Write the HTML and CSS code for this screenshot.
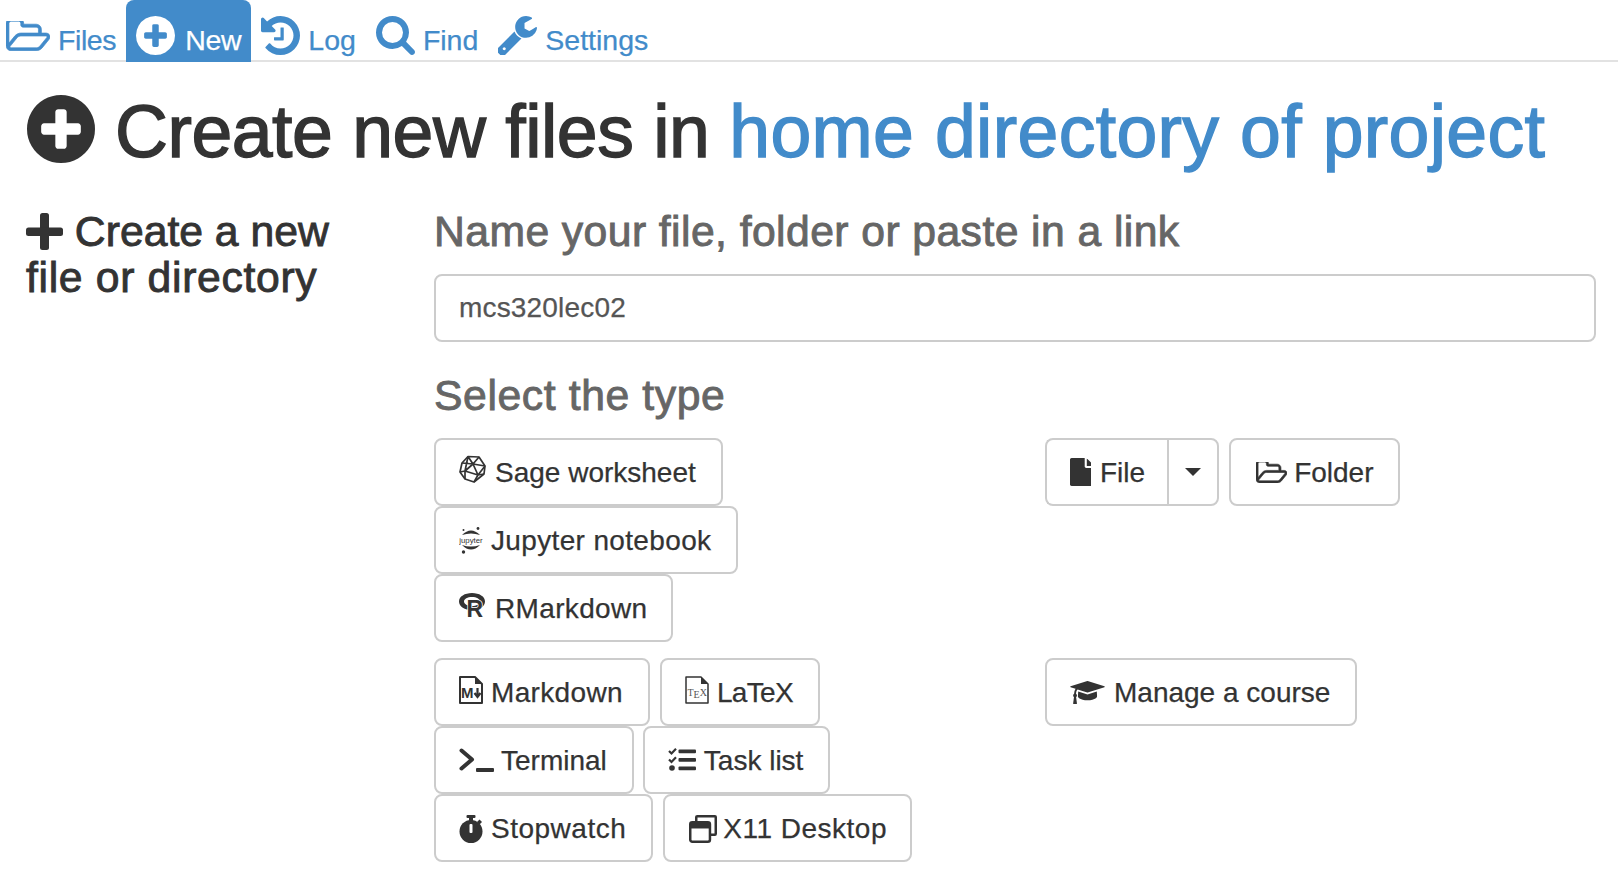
FILE: index.html
```html
<!DOCTYPE html>
<html lang="en">
<head>
<meta charset="utf-8">
<title>Create new files</title>
<link rel="stylesheet" href="styles.css">
</head>
<body>
<nav class="tabs">
  <a class="tab tab-first"><svg class="ico ico-folder-nav" viewBox="64 256 1909 1280"><path fill="currentColor" stroke="currentColor" stroke-width="30" d="M1845 931q0-35-53-35h-1088q-40 0-85.500 21.500t-71.500 52.500l-294 363q-18 24-18 40 0 35 53 35h1088q40 0 86-22t71-53l294-363q18-22 18-39zm-1141-163h768v-160q0-40-28-68t-68-28h-576q-40 0-68-28t-28-68v-64q0-40-28-68t-68-28h-320q-40 0-68 28t-28 68v853l256-315q44-53 116-87.500t140-34.500zm1269 163q0 62-46 120l-295 363q-43 53-116 87.500t-140 34.500h-1088q-92 0-158-66t-66-158v-960q0-92 66-158t158-66h320q92 0 158 66t66 158v32h544q92 0 158 66t66 158v160h192q54 0 99 24.500t67 70.500q15 32 15 68z"/></svg><span>Files</span></a>
  <a class="tab tab-active"><svg class="ico ico-nav" viewBox="128 128 1536 1536"><path fill="currentColor" d="M1344 960v-128q0-26-19-45t-45-19h-256v-256q0-26-19-45t-45-19h-128q-26 0-45 19t-19 45v256h-256q-26 0-45 19t-19 45v128q0 26 19 45t45 19h256v256q0 26 19 45t45 19h128q26 0 45-19t19-45v-256h256q26 0 45-19t19-45zm320-64q0 209-103 385.500t-279.500 279.500-385.500 103-385.500-103-279.500-279.500-103-385.500 103-385.500 279.500-279.500 385.500-103 385.500 103 279.500 279.500 103 385.500z"/></svg><span>New</span></a>
  <a class="tab tab-tight"><svg class="ico ico-nav" viewBox="128 128 1536 1536"><path fill="currentColor" d="M1664 896q0 156-61 298t-164 245-245 164-298 61q-172 0-327-72.500t-264-204.500q-7-10-6.500-22.500t8.500-20.500l137-138q10-9 25-9 16 2 23 12 73 95 179 147t225 52q104 0 198.500-40.500t163.500-109.500 109.500-163.500 40.500-198.500-40.500-198.500-109.500-163.500-163.500-109.500-198.500-40.500q-98 0-188 35.500t-160 101.500l137 138q31 30 14 69-17 40-59 40h-448q-26 0-45-19t-19-45v-448q0-42 40-59 39-17 69 14l130 129q107-101 244.500-156.500t284.500-55.500q156 0 298 61t245 164 164 245 61 298zm-640-288v448q0 14-9 23t-23 9h-320q-14 0-23-9t-9-23v-64q0-14 9-23t23-9h224v-352q0-14 9-23t23-9h64q14 0 23 9t9 23z"/></svg><span>Log</span></a>
  <a class="tab tab-tight"><svg class="ico ico-nav" viewBox="64 128 1664 1664"><path fill="currentColor" d="M1216 832q0-185-131.500-316.500t-316.500-131.500-316.500 131.500-131.500 316.500 131.500 316.500 316.500 131.500 316.500-131.500 131.500-316.500zm512 832q0 52-38 90t-90 38q-54 0-90-38l-343-342q-179 124-399 124-143 0-273.500-55.500t-225-150-150-225-55.500-273.500 55.500-273.500 150-225 225-150 273.500-55.500 273.500 55.500 225 150 150 225 55.500 273.500q0 220-124 399l343 343q37 37 37 90z"/></svg><span>Find</span></a>
  <a class="tab tab-tight"><svg class="ico ico-nav" viewBox="64 128 1600 1600"><path fill="currentColor" d="M384 1472q0-26-19-45t-45-19-45 19-19 45 19 45 45 19 45-19 19-45zm644-420l-682 682q-37 37-90 37-52 0-91-37l-106-108q-38-36-38-90 0-53 38-91l681-681q39 98 114.500 173.500t173.500 114.500zm634-435q0 39-23 106-47 134-164.500 217.500t-258.500 83.500q-185 0-316.500-131.500t-131.500-316.500 131.500-316.500 316.500-131.500q58 0 121.500 16.500t107.500 46.500q16 11 16 28t-16 28l-293 169v224l193 107q5-3 79-48.500t135.500-81 70.500-35.500q15 0 23.500 10t8.500 25z"/></svg><span>Settings</span></a>
</nav>

<main class="page">
  <h1 class="title"><svg class="ico ico-title" viewBox="128 128 1536 1536"><path fill="currentColor" d="M1344 960v-128q0-26-19-45t-45-19h-256v-256q0-26-19-45t-45-19h-128q-26 0-45 19t-19 45v256h-256q-26 0-45 19t-19 45v128q0 26 19 45t45 19h256v256q0 26 19 45t45 19h128q26 0 45-19t19-45v-256h256q26 0 45-19t19-45zm320-64q0 209-103 385.500t-279.500 279.500-385.500 103-385.500-103-279.500-279.500-103-385.500 103-385.500 279.500-279.500 385.500-103 385.500 103 279.500 279.500 103 385.500z"/></svg><span><span class="title-lead">Create new files in </span><span class="link">home directory of project</span></span></h1>

  <div class="layout">
    <aside class="side">
      <h3 class="side-title"><svg class="ico ico-plus" viewBox="0 0 37 37"><rect x="14" y="0" width="9" height="37" rx="2.500" fill="currentColor"/><rect x="0" y="14.500" width="37" height="8.500" rx="2.500" fill="currentColor"/></svg> Create a new<br><span class="side-line2">file or directory</span></h3>
    </aside>
    <section class="content">
      <h3 class="label">Name your file, folder or paste in a link</h3>
      <div class="name-input">mcs320lec02</div>
      <h3 class="label label-type">Select the type</h3>

      <div class="type-grid">
        <div class="stack">
          <div class="btn-row"><button class="btn"><svg class="ico ico-sage" viewBox="0 0 27 28"><g fill="none" stroke="currentColor" stroke-width="1.700" stroke-linejoin="round"><path d="M9 1.500 L20 2 L26 11 L25 19 L15 27 L6 24 L1 17 L3 8 Z"/><path d="M9 1.500 L14 9 L3 8 M14 9 L20 2 M14 9 L26 11 M14 9 L6 16 L1 17 M14 9 L19 20 L25 19 M6 16 L19 20 L15 27 M6 16 L6 24 M9 1.500 L6 16 M19 20 L26 11"/></g></svg><span>Sage worksheet</span></button></div>
          <div class="btn-row"><button class="btn btn-tight"><svg class="ico ico-jup" viewBox="0 0 24 28"><path fill="currentColor" d="M3 9 Q12 0 21 9 Q12 6 3 9 Z M3 19 Q12 28 21 19 Q12 22 3 19 Z"/><circle cx="19" cy="2.500" r="1.400" fill="currentColor"/><circle cx="4.500" cy="4" r="1" fill="currentColor"/><circle cx="4.500" cy="26" r="1.700" fill="currentColor"/><text class="jup-text" x="12" y="16.500">jupyter</text></svg><span class="sp-jup">Jupyter notebook</span></button></div>
          <div class="btn-row"><button class="btn btn-r"><svg class="ico ico-r" viewBox="0 0 27 30"><path fill="currentColor" fill-rule="evenodd" d="M13 0C5.800 0 0 3.500 0 8.500 C0 13.500 5.800 17 13 17 C20.200 17 26 13.500 26 8.500 C26 3.500 20.200 0 13 0Z M13 4 C8.500 4 5 6 5 8.500 C5 11 8.500 13 13 13 C17.500 13 21 11 21 8.500 C21 6 17.500 4 13 4Z"/><text class="r-text" x="7.500" y="23.500">R</text></svg><span class="sp-md">RMarkdown</span></button></div>
        </div>
        <div class="btn-row">
          <div class="split"><button class="btn btn-split-main"><svg class="ico ico-file" viewBox="256 0 1280 1792" preserveAspectRatio="none"><path fill="currentColor" d="M1152 512v-472q22 14 36 28l408 408q14 14 28 36h-472zm-128 32q0 40 28 68t68 28h544v1056q0 40-28 68t-68 28h-1344q-40 0-68-28t-28-68v-1600q0-40 28-68t68-28h800v544z" transform="translate(128 0)"/></svg><span>File</span></button><button class="btn btn-caret"><span class="caret"></span></button></div>
          <button class="btn btn-folder"><svg class="ico ico-folder" viewBox="64 256 1909 1280"><path fill="currentColor" stroke="currentColor" stroke-width="40" d="M1845 931q0-35-53-35h-1088q-40 0-85.500 21.500t-71.500 52.500l-294 363q-18 24-18 40 0 35 53 35h1088q40 0 86-22t71-53l294-363q18-22 18-39zm-1141-163h768v-160q0-40-28-68t-68-28h-576q-40 0-68-28t-28-68v-64q0-40-28-68t-68-28h-320q-40 0-68 28t-28 68v853l256-315q44-53 116-87.500t140-34.500zm1269 163q0 62-46 120l-295 363q-43 53-116 87.500t-140 34.500h-1088q-92 0-158-66t-66-158v-960q0-92 66-158t158-66h320q92 0 158 66t66 158v32h544q92 0 158 66t66 158v160h192q54 0 99 24.500t67 70.500q15 32 15 68z"/></svg><span>Folder</span></button>
        </div>
      </div>

      <div class="type-grid type-grid-second">
        <div class="stack">
          <div class="btn-row btn-row-10">
            <button class="btn btn-tight"><svg class="ico ico-doc" viewBox="0 0 24 28"><path fill="none" stroke="currentColor" stroke-width="2" stroke-linejoin="round" d="M1 1 H16 L23 8 V27 H1 Z"/><path fill="currentColor" d="M16 1 V8 H23 Z"/><text class="md-text" x="2" y="21.500">M</text><path fill="none" stroke="currentColor" stroke-width="2.200" d="M18.500 12 V20 M15.500 17 L18.500 21 L21.500 17"/></svg><span class="sp-md">Markdown</span></button>
            <button class="btn btn-tight"><svg class="ico ico-doc" viewBox="0 0 24 28"><path fill="none" stroke="currentColor" stroke-width="1.500" stroke-linejoin="round" d="M1 1 H16 L23 8 V27 H1 Z"/><path fill="currentColor" d="M16 1 V8 H23 Z"/><text class="tex-text" x="2.500" y="20">T<tspan dy="2">E</tspan><tspan dy="-2">X</tspan></text></svg><span class="sp-latex">LaTeX</span></button>
          </div>
          <div class="btn-row btn-row-9">
            <button class="btn btn-term"><svg class="ico ico-term" viewBox="0 0 35 24"><path fill="none" stroke="currentColor" stroke-width="4" stroke-linecap="round" stroke-linejoin="round" d="M2.500 2.500 L13 11.500 L2.500 20.500"/><rect x="17" y="20" width="18" height="4" rx="1" fill="currentColor"/></svg><span>Terminal</span></button>
            <button class="btn btn-tight"><svg class="ico ico-tasks" viewBox="0 0 28 23"><g fill="none" stroke="currentColor" stroke-width="2.200"><path d="M1 3 L3.500 5.500 L8 0.800 M1 11.500 L3.500 14 L8 9.300"/></g><circle cx="4" cy="20" r="2.800" fill="currentColor"/><rect x="10.500" y="1.500" width="17.500" height="3.800" rx="1" fill="currentColor"/><rect x="10.500" y="10" width="17.500" height="3.800" rx="1" fill="currentColor"/><rect x="10.500" y="18.500" width="17.500" height="3.800" rx="1" fill="currentColor"/></svg><span>Task list</span></button>
          </div>
          <div class="btn-row btn-row-10">
            <button class="btn btn-tight"><svg class="ico ico-watch" viewBox="0 0 24 28"><rect x="7.500" y="0" width="9" height="3" rx="1" fill="currentColor"/><rect x="10" y="2" width="4" height="4" fill="currentColor"/><path d="M18 7 L20.500 4.500 L23 7 L20.500 9.500 Z" fill="currentColor"/><circle cx="12" cy="16.500" r="11.500" fill="currentColor"/><rect x="10.500" y="9" width="3" height="9" rx="1" fill="#fff"/></svg><span class="sp-watch">Stopwatch</span></button>
            <button class="btn btn-win"><svg class="ico ico-win" viewBox="0 0 27 27"><path fill="none" stroke="currentColor" stroke-width="2.400" stroke-linejoin="round" d="M7 6 V2 Q7 1.200 8 1.200 H25 Q25.800 1.200 25.800 2 V18 Q25.800 19 25 19 H20"/><rect x="1.200" y="7" width="19" height="18.800" rx="2" fill="#fff" stroke="currentColor" stroke-width="2.400"/><rect x="1.200" y="7" width="19" height="6" fill="currentColor"/></svg><span class="sp-watch">X11 Desktop</span></button>
          </div>
        </div>
        <div class="btn-row">
          <button class="btn"><svg class="ico ico-cap" viewBox="0 128 2304 1536"><path fill="currentColor" d="M1774 836l18 316q4 69-82 128t-235 93.500-323 34.500-323-34.500-235-93.500-82-128l18-316 574 181q22 7 48 7t48-7zm530-324q0 23-22 31l-1120 352q-4 1-10 1t-10-1l-652-206q-43 34-71 111.500t-34 178.500q63 36 63 109 0 69-58 107l58 433q2 14-8 25-9 11-24 11h-192q-15 0-24-11-10-11-8-25l58-433q-58-38-58-107 0-73 65-111 11-207 98-330l-333-104q-22-8-22-31t22-31l1120-352q4-1 10-1t10 1l1120 352q22 8 22 31z"/></svg><span>Manage a course</span></button>
        </div>
      </div>
    </section>
  </div>
</main>
</body>
</html>
```
FILE: styles.css
```css
* { box-sizing: border-box; }
html, body { margin: 0; padding: 0; background: #fff; overflow: hidden; }
body { font-family: "Liberation Sans", Arial, sans-serif; color: #333; font-size: 28px; }

.ico { display: block; flex: none; }

.tabs { display: flex; height: 62px; border-bottom: 2px solid #e2e2e2; }
.tab { display: flex; align-items: flex-end; gap: 10px; padding: 0 10px 6px; height: 62px; color: #428bca; font-size: 28.5px; line-height: 32px; -webkit-text-stroke: .25px currentColor; }
.tab-first { padding: 0 10px 6px 6px; gap: 8px; letter-spacing: -.4px; }
.tab-tight { gap: 8px; }
.tab-active { background: #428bca; color: #fff; border-radius: 8px 8px 0 0; letter-spacing: -.3px; }
.ico-nav { width: 39px; height: 39px; margin-bottom: 1px; }
.ico-folder-nav { width: 44px; height: 30px; margin-bottom: 5px; }

.page { padding: 0 22px 0 26px; }
.title { display: flex; align-items: center; gap: 20px; margin: 30px 0 0; font-size: 73.4px; line-height: 80px; font-weight: 400; -webkit-text-stroke: 1.4px #333; white-space: nowrap; }
.ico-title { width: 68px; height: 68px; margin: 0 0 6px 1px; }
.title-lead { letter-spacing: -.49px; }
.link { color: #428bca; letter-spacing: .33px; -webkit-text-stroke: 1.4px #428bca; }

.layout { display: flex; margin-top: 36px; }
.side { width: 408px; flex: none; }
.side-title { margin: 0; font-size: 42.7px; line-height: 46px; font-weight: 400; -webkit-text-stroke: .9px #333; }
.side-line2 { letter-spacing: .67px; }
.ico-plus { display: inline-block; width: 37px; height: 37px; vertical-align: -4px; }
.content { flex: 1; }
.label { margin: 0 0 20px; font-size: 42.7px; line-height: 46px; font-weight: 400; letter-spacing: .42px; color: #666; -webkit-text-stroke: .9px #666; }
.label-type { margin-top: 30px; letter-spacing: .6px; }
.name-input { height: 68px; border: 2px solid #ccc; border-radius: 8px; padding: 0 23px; line-height: 64px; font-size: 28px; letter-spacing: .18px; color: #555; -webkit-text-stroke: .25px #555; }

.type-grid { display: grid; grid-template-columns: 611px 1fr; }
.type-grid-second { margin-top: 16px; }
.stack { display: flex; flex-direction: column; gap: 0; }
.btn-row { display: flex; gap: 11px; }
.btn-row-10 { gap: 10px; }
.btn-row-9 { gap: 9px; }

.btn { display: inline-flex; align-items: center; gap: 9px; height: 68px; padding: 0 25px 0 23px; background: #fff; border: 2px solid #ccc; border-radius: 8px; color: #333; font-family: inherit; font-size: 28px; line-height: 32px; white-space: nowrap; -webkit-text-stroke: .25px #333; }
.btn > span { padding-top: 2px; }
.btn-tight { gap: 8px; }
.btn-term { gap: 7px; }
.btn-win { gap: 6px; padding: 0 23px 0 24px; }
.btn-folder { gap: 7px; padding: 0 24px 0 25px; }
.btn-r { padding-right: 23px; }
.sp-jup { letter-spacing: .35px; }
.sp-md { letter-spacing: .35px; }
.sp-latex { letter-spacing: -.7px; }
.sp-watch { letter-spacing: .5px; }

.split { display: flex; margin-right: -1px; }
.btn-split-main { border-radius: 8px 0 0 8px; border-right: 0; padding-right: 22px; }
.btn-caret { border-radius: 0 8px 8px 0; padding: 0 16px; }
.btn > .caret { display: block; width: 0; height: 0; padding: 0; border-style: solid; border-width: 8px 8px 0; border-color: #333 transparent transparent; }

.ico-sage { width: 27px; height: 28px; margin-top: -6px; }
.ico-jup { width: 24px; height: 28px; margin-top: -1px; color: #333; }
.jup-text { font-family: "Liberation Sans", sans-serif; font-size: 7.800px; text-anchor: middle; fill: #333; -webkit-text-stroke: 0; }
.ico-r { width: 27px; height: 30px; margin-top: 0; }
.r-text { font-family: "Liberation Sans", sans-serif; font-size: 23px; font-weight: 700; fill: #333; stroke: #fff; stroke-width: 1.500px; paint-order: stroke; -webkit-text-stroke: 0; }
.ico-doc { width: 24px; height: 28px; margin-top: -5px; }
.md-text { font-family: "Liberation Sans", sans-serif; font-size: 15px; font-weight: 700; fill: #333; }
.tex-text { font-family: "Liberation Serif", serif; font-size: 10px; fill: #555; -webkit-text-stroke: 0; }
.ico-term { width: 35px; height: 24px; margin-top: -1px; }
.ico-tasks { width: 28px; height: 23px; margin-top: -1px; }
.ico-watch { width: 24px; height: 28px; margin-top: 2px; }
.ico-win { width: 28px; height: 28px; margin-top: 2px; }
.ico-file { width: 21px; height: 28px; margin-top: -1px; }
.ico-folder { width: 31px; height: 21px; margin-top: 1px; }
.ico-cap { width: 35px; height: 23px; margin-top: 1px; }
```
